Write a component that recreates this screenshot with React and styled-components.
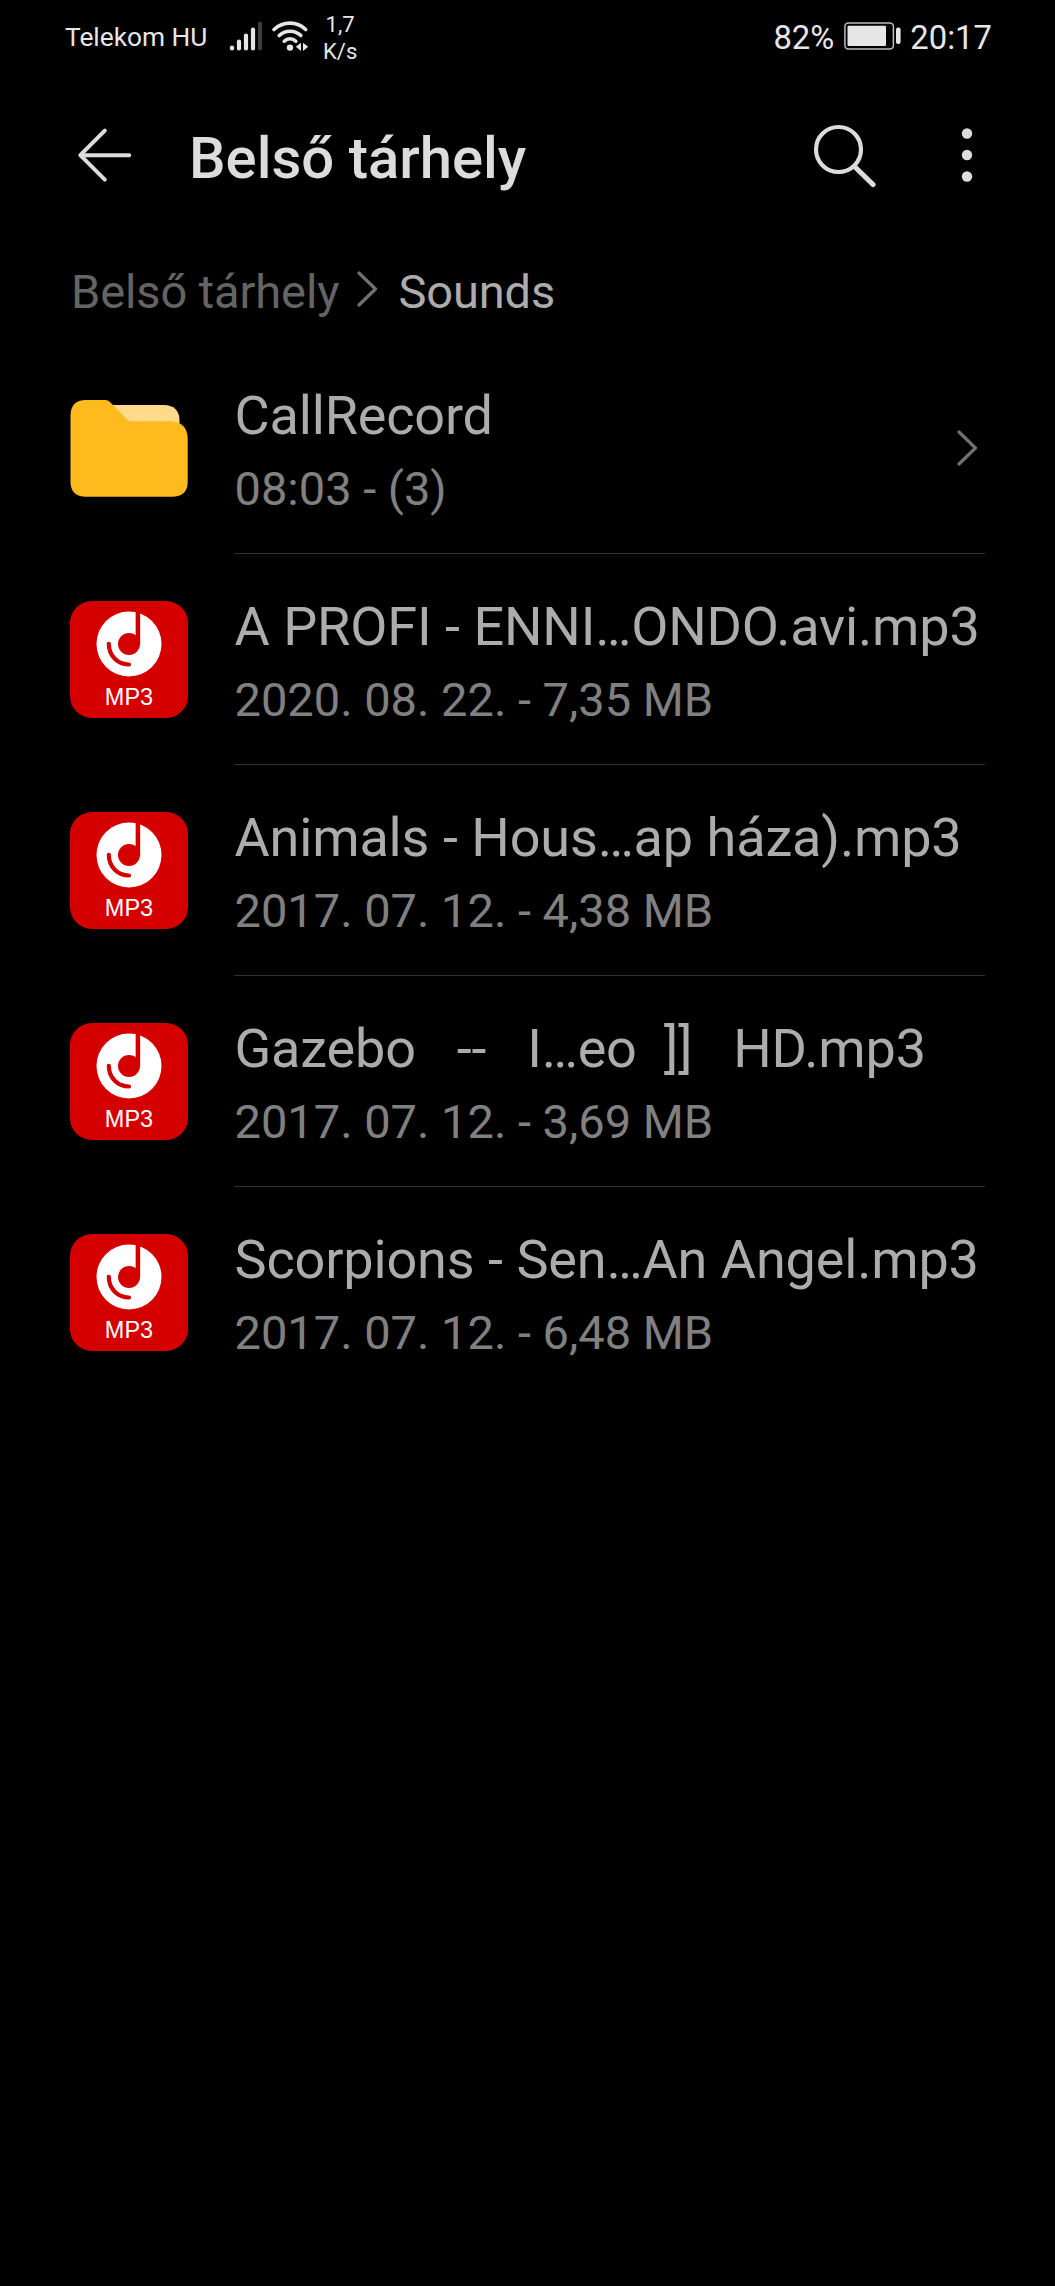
import React from "react";
import styled, { createGlobalStyle, css } from "styled-components";

const GlobalStyle = createGlobalStyle`
  * {
    box-sizing: border-box;
  }
  body {
    margin: 0;
    background-color: #000;
    font-family: Roboto, "Noto Sans", sans-serif;
  }
  svg {
    display: block;
    flex-shrink: 0;
  }
`;

const Screen = styled.div`
  width: 100%;
  min-height: 2286px;
  background-color: #000;
`;

const StatusBar = styled.div`
  height: 75px;
  padding: 0 63px 0 65px;
  display: flex;
  justify-content: space-between;
  color: #e6e6e6;
`;

const StatusGroup = styled.div`
  display: flex;
  align-items: center;
  gap: ${({ gap }) => gap}px;

  svg {
    margin-bottom: 3px;
  }
`;

const Carrier = styled.span`
  width: 156px;
  margin-bottom: 2px;
  font-size: 26.3px;
  line-height: 32px;
  white-space: nowrap;
`;

const NetSpeed = styled.div`
  margin-left: 6px;
  font-size: 22px;
  line-height: 27px;
  text-align: center;
`;

const StatusText = styled.span`
  font-size: 32.8px;
  line-height: 40px;
`;

const Header = styled.header`
  height: 157px;
  padding: 3px 82px 0 77px;
  display: flex;
  align-items: center;
  color: #dcdcdc;
`;

const Title = styled.h1`
  flex: 1;
  margin: 5px 0 0 57px;
  font-size: 58px;
  font-weight: 500;
  line-height: 70px;
`;

const IconButton = styled.button`
  margin: 0 0 0 ${({ gap }) => gap || 0}px;
  padding: 0;
  border: 0;
  background: none;
  color: inherit;
`;

const SearchButton = styled(IconButton)`
  margin-top: 2px;
`;

const Breadcrumb = styled.nav`
  height: 111px;
  padding: 8px 71px 0;
  display: flex;
  align-items: center;
`;

const Crumb = styled.span`
  font-size: 47px;
  line-height: 56px;
  letter-spacing: -0.1px;
  color: ${({ current }) => (current ? "#acacac" : "#646464")};
`;

const CrumbArrow = styled.svg`
  margin: 0 20px 5px 18px;
`;

const List = styled.ul`
  margin: 0;
  padding: 0;
  list-style: none;
`;

const Row = styled.li`
  height: 211px;
  padding: 0 70px;
  display: flex;
  align-items: center;
`;

const RowBody = styled.div`
  flex: 1;
  align-self: stretch;
  margin-left: 46px;
  padding-left: 0.5px;
  display: flex;
  align-items: center;
  justify-content: space-between;
  ${({ divided }) =>
    divided &&
    css`
      border-bottom: 1px solid #303030;
    `}
`;

const RowText = styled.div`
  align-self: flex-start;
  padding-top: 41px;
  display: flex;
  flex-direction: column;
  gap: 13px;
  white-space: pre;
`;

const Name = styled.div`
  font-size: 54px;
  line-height: 64px;
  letter-spacing: -0.16px;
  word-spacing: 0.4px;
  color: #acacac;
`;

const Details = styled.div`
  font-size: 47px;
  line-height: 56px;
  color: #808080;
`;

const FileIcon = styled.div`
  width: 118px;
  height: 117px;
  border-radius: 22px;
  background-color: #d40000;
  display: flex;
  flex-direction: column;
  align-items: center;
  padding-top: 10px;
  color: #fff;
  font-family: "Liberation Sans", sans-serif;
  font-size: 23.5px;
  line-height: 40px;
`;

const Signal = () => (
  <svg width="34" height="32" viewBox="0 0 34 32" strokeWidth="4.2" strokeLinecap="round" stroke="#e6e6e6">
    <path d="M3 27.5v1" />
    <path d="M10 21.5v7" />
    <path d="M17 15.5v13" />
    <path d="M24 9.5v19" />
    <path d="M31 3.5v25" stroke="#3c3c3c" />
  </svg>
);

const Wifi = () => (
  <svg width="38" height="32" viewBox="0 0 38 32" fill="none" stroke="#e6e6e6" strokeWidth="3.6" strokeLinecap="round">
    <path d="M3 9.5C12 1 26 1 34.7 9.5" />
    <path d="M8.2 15.6C14 9.8 24 9.8 29.8 15.6" />
    <path d="M13.2 21.2C16.5 18 21.5 18 24.8 21.2" />
    <circle cx="19" cy="27.6" r="3.2" fill="#e6e6e6" stroke="none" />
    <path d="M30 22.8v8.2l-5.2-4.2zM32 22.8v8.2l5.2-4.2z" fill="#e6e6e6" stroke="none" />
  </svg>
);

const Battery = () => (
  <svg width="57" height="28" viewBox="0 0 57 28">
    <rect x="0.9" y="0.9" width="48.5" height="26" rx="3.5" fill="none" stroke="#bdbdbd" strokeWidth="1.5" />
    <rect x="3.5" y="3.7" width="38.5" height="20.3" rx="1" fill="#e6e6e6" />
    <rect x="52" y="5.5" width="4.6" height="16.5" rx="2" fill="#e6e6e6" />
  </svg>
);

const BackArrow = () => (
  <svg width="55" height="56" viewBox="0 0 55 56" fill="none" stroke="currentColor" strokeWidth="4" strokeLinecap="round" strokeLinejoin="round">
    <path d="M27.8 3.7L3.3 28.200l24.500 24.500M3.3 28.200h48.900" />
  </svg>
);

const SearchIcon = () => (
  <svg width="64" height="64" viewBox="0 0 64 64" fill="none" stroke="currentColor" strokeLinecap="round">
    <circle cx="25.5" cy="25.5" r="22.5" strokeWidth="4.2" />
    <path d="M42 43l18 17.5" strokeWidth="5.2" />
  </svg>
);

const MoreIcon = () => (
  <svg width="12" height="54" viewBox="0 0 12 54" fill="currentColor">
    <circle cx="6" cy="5.5" r="5.2" />
    <circle cx="6" cy="27" r="5.2" />
    <circle cx="6" cy="48.5" r="5.2" />
  </svg>
);

const ChevronPath = () => (
  <path
    d="M2 2l16.5 16L2 34"
    fill="none"
    stroke="#707070"
    strokeWidth="3.2"
    strokeLinecap="round"
    strokeLinejoin="round"
  />
);

const Folder = () => (
  <svg width="118" height="98" viewBox="0 0 118 98">
    <path d="M38 5H94Q109 5.5 109.5 20V40H60z" fill="#ffda8c" />
    <path
      d="M16 0H35.5Q38 0 40 2L57 19.5Q59 21.3 61.5 21.3H100Q117.7 22 117.7 39V81.5Q117.7 96.7 102 96.7H16Q0.5 96.7 0.5 81.5V16Q0.5 0 16 0z"
      fill="#ffba1d"
    />
  </svg>
);

const Mp3Icon = () => (
  <FileIcon>
    <svg width="66" height="66" viewBox="0 0 66 66">
      <circle cx="33" cy="33" r="32.5" fill="#fff" />
      <circle cx="33" cy="33" r="11" fill="#d40000" />
      <path d="M41.9 0V33.500" stroke="#d40000" strokeWidth="4.5" fill="none" />
      <path d="M12.8 32.8C12.8 45 22 53.5 33 53.5" stroke="#d40000" strokeWidth="4.2" strokeLinecap="round" fill="none" />
    </svg>
    MP3
  </FileIcon>
);

const items = [
  { type: "folder", name: "CallRecord", details: "08:03 - (3)" },
  { type: "mp3", name: "A PROFI - ENNI…ONDO.avi.mp3", details: "2020. 08. 22. - 7,35 MB" },
  { type: "mp3", name: "Animals - Hous…ap háza).mp3", details: "2017. 07. 12. - 4,38 MB" },
  { type: "mp3", name: "Gazebo   --   I…eo  ]]   HD.mp3", details: "2017. 07. 12. - 3,69 MB" },
  { type: "mp3", name: "Scorpions - Sen…An Angel.mp3", details: "2017. 07. 12. - 6,48 MB" }
];

const App = () => {
  return (
    <Screen>
      <GlobalStyle />
      <StatusBar>
        <StatusGroup gap={8}>
          <Carrier>Telekom HU</Carrier>
          <Signal />
          <Wifi />
          <NetSpeed>
            1,7
            <br />
            K/s
          </NetSpeed>
        </StatusGroup>
        <StatusGroup gap={9.5}>
          <StatusText>82%</StatusText>
          <Battery />
          <StatusText>20:17</StatusText>
        </StatusGroup>
      </StatusBar>

      <Header>
        <IconButton aria-label="Back">
          <BackArrow />
        </IconButton>
        <Title>Belső tárhely</Title>
        <SearchButton aria-label="Search">
          <SearchIcon />
        </SearchButton>
        <IconButton aria-label="More" gap={84}>
          <MoreIcon />
        </IconButton>
      </Header>

      <Breadcrumb>
        <Crumb>Belső tárhely</Crumb>
        <CrumbArrow width="21" height="36" viewBox="0 0 21 36">
          <ChevronPath />
        </CrumbArrow>
        <Crumb current>Sounds</Crumb>
      </Breadcrumb>

      <List>
        {items.map((item, index) => (
          <Row key={item.name}>
            {item.type === "folder" ? <Folder /> : <Mp3Icon />}
            <RowBody divided={index < items.length - 1}>
              <RowText>
                <Name>{item.name}</Name>
                <Details>{item.details}</Details>
              </RowText>
              {item.type === "folder" && (
                <svg width="28" height="36" viewBox="0 0 28 36">
                  <ChevronPath />
                </svg>
              )}
            </RowBody>
          </Row>
        ))}
      </List>
    </Screen>
  );
};

export default App;
